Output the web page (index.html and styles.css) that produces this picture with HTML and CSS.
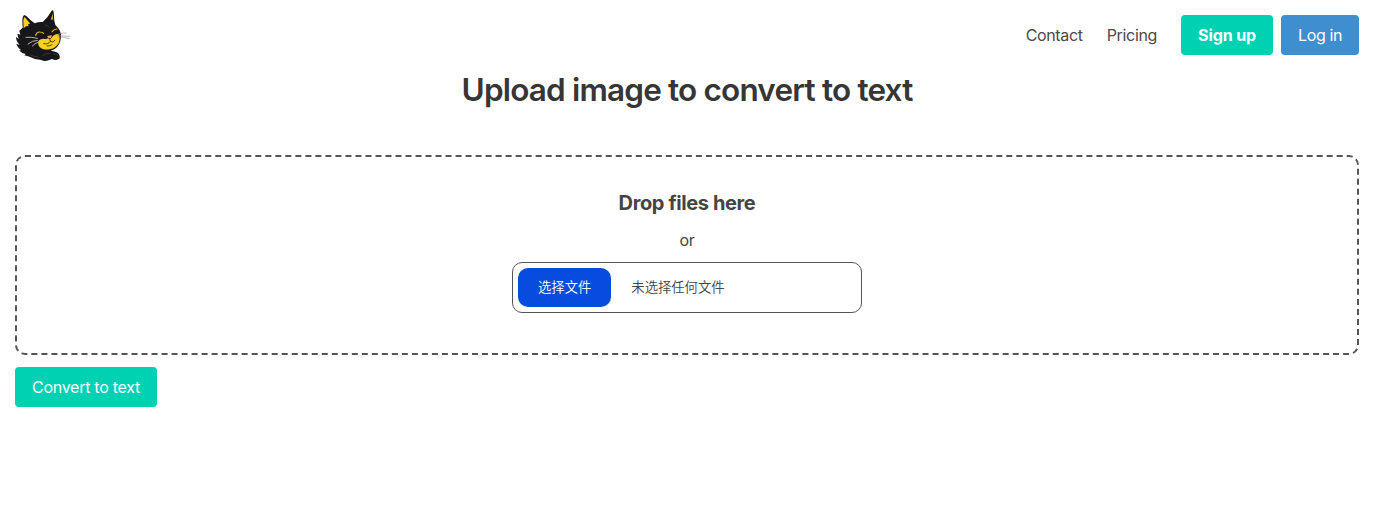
FILE: index.html
```html
<!DOCTYPE html>
<html lang="en">
<head>
    <meta charset="UTF-8">
    <meta name="viewport" content="width=device-width, initial-scale=1.0">
    <title>Upload image to convert to text</title>
    <link rel="stylesheet" href="styles.css">
</head>
<body>

    <!-- Navigation -->
    <nav class="navbar">
        <a class="navbar-brand" href="#" aria-label="Home">
            <svg class="logo" viewBox="21 12 168 168">
                <path fill="#17171a" d="M44 71 L43 50 Q43 36 49 33 Q55 34 67 48 L80 58 Q91 53 104 54 L118 40 L131 20 Q136 16 137 25 L139 50 L142 63 Q155 74 159 90 Q161 111 148 128 Q140 137 128 140 Q144 142 150 147 Q158 157 154 164 L145 168 Q137 168 132 165 L122 169 Q109 174 100 168 Q82 168 65 158 L49 154 L53 150 Q39 147 33 139 L40 139 Q27 128 25 119 L35 123 Q24 112 24 99 L32 105 L28 89 L37 92 L34 80 Z"/>
                <path fill="#f8cf22" d="M47 73 L46 52 Q46 42 50 39 L67 59 L60 60 L62 66 L54 67 Z"/>
                <path fill="#d5a925" d="M128 48 L134 28 L136 50 L133 46 Z"/>
                <path fill="#f8cf22" d="M106 104 Q115 107 119 103 Q126 107 131 101 Q139 89 151 90 Q159 104 151 119 Q141 133 125 136 Q105 139 94 128 Q87 119 93 109 Q98 104 106 104 Z"/>
                <path class="eye" d="M83 94 Q86 83 95 84 Q103 84 107 88 M132 83 Q136 76 147 75"/>
                <path fill="#f3a184" d="M117 96 L132 94 L129 102 L123 104 Z"/>
                <path class="mouth" d="M125 103 L127 112 Q121 122 107 119 M127 112 Q135 118 141 109 M117 126 Q126 127 132 122"/>
                <path class="whisker" d="M88 103 Q70 98 54 100 M88 109 Q73 109 60 120 M91 114 Q80 118 73 126"/>
                <path class="whisker-dark" d="M149 91 Q164 86 174 87 M149 95 L186 97 M150 99 Q166 98 184 104"/>
                <path class="fur" d="M104 154 Q112 148 128 148 M138 150 Q146 149 150 154 M67 153 Q76 158 90 159 M111 63 Q119 65 124 69"/>
            </svg>
        </a>
        <div class="navbar-end">
            <a class="navbar-item" href="#">Contact</a>
            <a class="navbar-item" href="#">Pricing</a>
            <div class="buttons">
                <a class="button is-primary" href="#"><strong>Sign up</strong></a>
                <a class="button is-info" href="#">Log in</a>
            </div>
        </div>
    </nav>

    <h1 class="title">Upload image to convert to text</h1>

    <!-- Upload form -->
    <form class="upload-form">
        <label class="drop-container" for="images">
            <span class="drop-title">Drop files here</span>
            <span class="drop-or">or</span>
            <span class="file-box">
                <span class="file-button">选择文件</span>
                <span class="file-name">未选择任何文件</span>
            </span>
            <input class="file-input" type="file" id="images" accept="image/*">
        </label>
        <button class="button is-primary" type="button">Convert to text</button>
    </form>

</body>
</html>
```

FILE: styles.css
```css
* {
    box-sizing: border-box;
}
body {
    margin: 0;
    padding: 8px 27px 0 15px;
    background-color: #fff;
    color: #4a4a4a;
    font-family: Inter, "Noto Sans CJK SC", sans-serif;
    font-size: 16px;
    letter-spacing: -0.27px;
    line-height: 24px;
}
a {
    color: inherit;
    text-decoration: none;
}
.navbar {
    display: flex;
    justify-content: space-between;
    align-items: center;
    height: 54px;
}
.navbar-brand {
    display: flex;
    padding-top: 2px;
}
.logo {
    width: 56px;
    height: 56px;
}
.logo .eye,
.logo .mouth,
.logo .whisker,
.logo .whisker-dark,
.logo .fur {
    fill: none;
    stroke-linecap: round;
    stroke-linejoin: round;
}
.logo .eye {
    stroke: #e8b923;
    stroke-width: 3.5;
}
.logo .mouth {
    stroke: #30290f;
    stroke-width: 2.5;
}
.logo .whisker {
    stroke: #e2d8d2;
    stroke-width: 2.4;
}
.logo .whisker-dark {
    stroke: #a58f83;
    stroke-width: 2;
}
.logo .fur {
    stroke: #45454a;
    stroke-width: 2;
}
.navbar-end {
    display: flex;
    align-items: center;
    gap: 24px;
}
.navbar-item {
    letter-spacing: -0.33px;
}
.buttons {
    display: flex;
    gap: 8px;
}
.button {
    display: inline-flex;
    align-items: center;
    justify-content: center;
    height: 40px;
    padding: 0 17px;
    border: none;
    border-radius: 4px;
    color: #fff;
    font-family: inherit;
    font-size: 16px;
    letter-spacing: inherit;
    white-space: nowrap;
    cursor: pointer;
}
.button strong {
    letter-spacing: -0.1px;
}
.is-primary {
    background-color: #00d1b2;
}
.is-info {
    background-color: #3e8ed0;
    letter-spacing: -0.4px;
}
.title {
    margin: 10px 0 0;
    color: #363636;
    font-size: 31.5px;
    font-weight: 600;
    letter-spacing: -0.82px;
    line-height: 36px;
    text-align: center;
}
.upload-form {
    margin-top: 47px;
}
.drop-container {
    display: flex;
    flex-direction: column;
    align-items: center;
    justify-content: center;
    gap: 10px;
    height: 200px;
    margin-bottom: 12px;
    padding: 20px 20px 30px;
    border: 2px dashed #555;
    border-radius: 10px;
    color: #444;
    cursor: pointer;
}
.drop-title {
    font-size: 20px;
    font-weight: 700;
    letter-spacing: -0.38px;
    line-height: 30px;
}
.file-box {
    display: flex;
    align-items: center;
    width: 350px;
    height: 51px;
    padding: 4px 5px;
    border: 1px solid #555;
    border-radius: 10px;
    font-size: 13.333px;
    font-weight: 350;
    letter-spacing: 0;
}
.file-button {
    margin-right: 20px;
    padding: 0 20px;
    border-radius: 10px;
    background-color: #084cdf;
    color: #fff;
    line-height: 39px;
}
.file-input {
    display: none;
}
```
